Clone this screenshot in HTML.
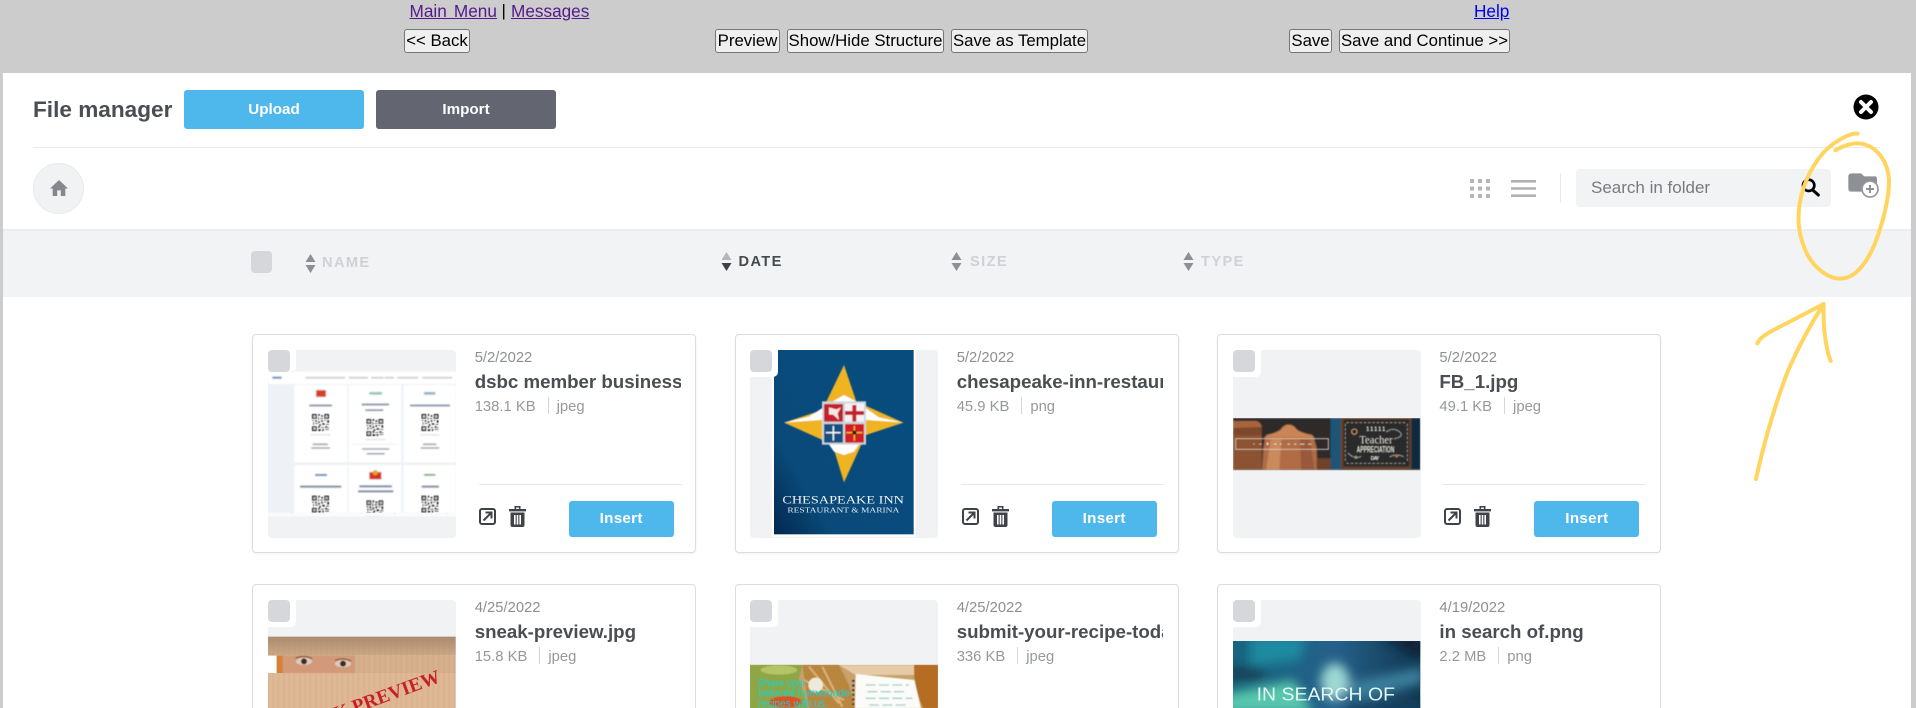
<!DOCTYPE html>
<html lang="en">
<head>
<meta charset="utf-8">
<title>File manager</title>
<style>
html,body{margin:0;padding:0;width:1916px;height:708px;overflow:hidden;background:#ccc;font-family:"Liberation Sans",sans-serif}
.a{position:absolute}
#page{position:relative;width:1916px;height:708px;overflow:hidden;background:#ccc}
.lnk{position:absolute;top:0;font-size:17.2px;line-height:22px;text-decoration:underline;color:#551a8b;white-space:nowrap}
.nb{position:absolute;top:29px;height:24px;box-sizing:border-box;background:#efefef;border:1px solid #767676;border-radius:3px;font-size:16.8px;line-height:21px;text-align:center;color:#000;white-space:nowrap;overflow:hidden}
.tb{position:absolute;top:90px;height:39px;width:180px;border-radius:3px;color:#fff;font-weight:bold;font-size:15.2px;line-height:40px;text-align:center}
.hd{position:absolute;font-size:14.6px;font-weight:bold;letter-spacing:1.4px;line-height:16px;color:#cfd1d5;white-space:nowrap}
.card{position:absolute;width:444px;height:219px;box-sizing:border-box;background:#fff;border:1px solid #dcdddf;border-radius:4px;box-shadow:0 1px 2px rgba(0,0,0,.06);overflow:hidden}
.card.r2{height:124px;border-bottom:none;border-radius:4px 4px 0 0;box-shadow:none}
.thumb{position:absolute;left:14.7px;top:15px;width:188px;height:188px;background:#f1f2f4;border-radius:4px;overflow:hidden}
.thumb svg{position:absolute;left:0;top:0;width:188px;height:188px;display:block}
.notch{position:absolute;left:14.7px;top:15px;width:28px;height:27px;background:#fff;border-radius:0 0 5px 0}
.cb{position:absolute;left:14.7px;top:15px;width:22px;height:22px;background:#d5d7db;border-radius:4px}
.date{position:absolute;left:221px;top:14px;font-size:14.8px;line-height:18px;color:#8d8f94;white-space:nowrap}
.title{position:absolute;left:221px;top:34.500px;width:206px;font-size:18.7px;font-weight:bold;line-height:23px;color:#4a4d52;white-space:nowrap;overflow:hidden}
.meta{position:absolute;left:221px;top:62px;height:18px;font-size:14.8px;line-height:18px;color:#96989c;white-space:nowrap}
.meta i{display:inline-block;width:1px;height:17px;background:#d5d7da;margin:0 8px 0 12px;vertical-align:-3px}
.rule{position:absolute;left:225px;top:149px;width:203px;height:1px;background:#e8e9eb}
.open{position:absolute;left:226px;top:173px;width:17px;height:17px}
.trash{position:absolute;left:256px;top:171px;width:17px;height:21px}
.ins{position:absolute;left:316px;top:166px;width:105px;height:36px;background:#4eb8ec;border-radius:3px;color:#fff;font-size:15.2px;font-weight:bold;letter-spacing:.3px;line-height:35px;text-align:center}
.c1 .thumb,.c1 .notch,.c1 .cb,.c1 .date,.c1 .title,.c1 .meta,.c1 .rule{margin-left:.5px}
.c1 .ins{margin-left:-.5px}
</style>
</head>
<body>
<div id="page">

<svg width="0" height="0" style="position:absolute">
<defs>
<filter id="b1" x="-5%" y="-5%" width="110%" height="110%"><feGaussianBlur stdDeviation="2.4"/></filter>
<filter id="b2" x="-5%" y="-5%" width="110%" height="110%"><feGaussianBlur stdDeviation="1.2"/></filter>
<filter id="b3" x="-30%" y="-30%" width="160%" height="160%"><feGaussianBlur stdDeviation="16"/></filter>
<linearGradient id="navy" x1="0.9" y1="0.3" x2="0" y2="1"><stop offset="0" stop-color="#084c7e"/><stop offset=".7" stop-color="#094a7a"/><stop offset="1" stop-color="#04284f"/></linearGradient>
<linearGradient id="card0" x1="0" y1="0" x2="0" y2="1"><stop offset="0" stop-color="#a98b70"/><stop offset="1" stop-color="#cda885"/></linearGradient>
<pattern id="ribs" width="16" height="16" patternUnits="userSpaceOnUse"><rect width="7" height="16" fill="#b08a68" opacity=".1"/></pattern>
<linearGradient id="sea" x1="0" y1="0" x2="1" y2="0"><stop offset="0" stop-color="#16657d"/><stop offset=".55" stop-color="#25608a"/><stop offset="1" stop-color="#103750"/></linearGradient>
<clipPath id="seaclip"><rect x="99" y="213" width="562" height="441"/></clipPath>
<clipPath id="fbclip"><rect x="99" y="294" width="562" height="157"/></clipPath>
<symbol id="qr" viewBox="0 0 51 51">
<rect width="51" height="51" fill="#fff"/>
<g fill="#222">
<path d="M0 0h15v15H0zM36 0h15v15H36zM0 36h15v15H0z"/>
<path d="M18 0h6v6h-6zM27 3h6v6h-6zM18 9h3v9h-3zM24 12h9v3h-9zM0 18h6v3H0zM9 18h6v6H9zM18 21h6v6h-6zM27 18h6v6h-6zM36 18h6v3h-6zM45 18h6v9h-6zM3 24h3v9H3zM9 27h9v3H9zM21 30h6v6h-6zM30 27h9v6h-9zM42 30h9v3h-9zM18 36h6v6h-6zM27 39h9v3h-9zM39 36h6v6h-6zM18 45h9v6h-9zM30 45h6v6h-6zM39 45h12v3H39zM45 39h6v3h-6z"/>
</g>
<g fill="#fff"><path d="M4 4h7v7H4zM40 4h7v7h-7zM4 40h7v7H4z"/></g>
<g fill="#222"><path d="M6 6h3v3H6zM42 6h3v3h-3zM6 42h3v3H6z"/></g>
</symbol>
</defs>
</svg>

<a class="lnk" style="left:409.5px;word-spacing:2.4px">Main Menu</a>
<div class="a" style="left:501.500px;top:0;font-size:17px;line-height:22px;color:#000">|</div>
<a class="lnk" style="left:511px">Messages</a>
<a class="lnk" style="left:1474px;color:#0000ee">Help</a>

<div class="nb" style="left:404px;width:66px">&lt;&lt; Back</div>
<div class="nb" style="left:715px;width:65px">Preview</div>
<div class="nb" style="left:787px;width:157px">Show/Hide Structure</div>
<div class="nb" style="left:951px;width:137px">Save as Template</div>
<div class="nb" style="left:1289px;width:43px">Save</div>
<div class="nb" style="left:1339px;width:171px">Save and Continue &gt;&gt;</div>

<div class="a" style="left:3px;top:73px;width:1908px;height:635px;background:#fff"></div>

<div class="a" style="left:33px;top:96px;font-size:22.6px;font-weight:bold;line-height:27px;color:#4a4d52;white-space:nowrap">File manager</div>
<div class="tb" style="left:184px;background:#4eb8ec">Upload</div>
<div class="tb" style="left:376px;background:#636670">Import</div>

<svg class="a" style="left:1853px;top:94px" width="26" height="26" viewBox="0 0 26 26">
<circle cx="13" cy="13" r="12.5" fill="#000"/>
<path d="M8 8l10 10M18 8L8 18" stroke="#fff" stroke-width="4" stroke-linecap="round"/>
</svg>

<div class="a" style="left:33px;top:147px;width:1847px;height:1px;background:#e9eaec"></div>

<div class="a" style="left:33px;top:163px;width:51px;height:51px;box-sizing:border-box;border-radius:50%;background:#f1f2f4;border:1px solid #e8e9eb"></div>
<svg class="a" style="left:49.5px;top:180px" width="18" height="16" viewBox="2 3 20 17" preserveAspectRatio="none">
<path d="M10 20v-6h4v6h5v-8h3L12 3 2 12h3v8z" fill="#85878d"/>
</svg>

<svg class="a" style="left:1470px;top:179px" width="20" height="19" viewBox="0 0 20 19" fill="#b4b5b7">
<path d="M0 0h4v4H0zM8 0h4v4H8zM16 0h4v4h-4zM0 7.5h4v4H0zM8 7.5h4v4H8zM16 7.5h4v4h-4zM0 15h4v4H0zM8 15h4v4H8zM16 15h4v4h-4z"/>
</svg>
<svg class="a" style="left:1511px;top:180px" width="25" height="17" viewBox="0 0 25 17" fill="#b0b1b3">
<path d="M0 0h25v2.600H0zM0 7.200h25v2.600H0zM0 14.400h25v2.600H0z"/>
</svg>
<div class="a" style="left:1560px;top:173px;width:1px;height:30px;background:#e9eaec"></div>
<div class="a" style="left:1576px;top:169px;width:255px;height:38px;background:#f2f3f5;border-radius:4px"></div>
<div class="a" style="left:1591px;top:177px;font-size:17px;line-height:21px;color:#777a80;white-space:nowrap">Search in folder</div>

<div class="a" style="left:3px;top:229px;width:1908px;height:68px;background:#f2f3f5;box-shadow:inset 0 3px 3px -2px rgba(0,0,0,.05)"></div>

<div class="a" style="left:251px;top:251px;width:21px;height:22px;background:#d5d7db;border-radius:4px"></div>

<svg class="a" style="left:305px;top:254px" width="11" height="19" viewBox="0 0 11 19"><path d="M5.5 0L10.5 8H.5zM.5 11h10l-5 8z" fill="#8d8f94"/></svg>
<div class="hd" style="left:322px;top:255px">NAME</div>
<svg class="a" style="left:721px;top:252px" width="11" height="19" viewBox="0 0 11 19"><path d="M5.5 0L10.5 8H.5z" fill="#b4b6ba"/><path d="M.5 11h10l-5 8z" fill="#3e4147"/></svg>
<div class="hd" style="left:738.500px;top:254px;color:#45484d">DATE</div>
<svg class="a" style="left:951px;top:252px" width="11" height="19" viewBox="0 0 11 19"><path d="M5.5 0L10.5 8H.5zM.5 11h10l-5 8z" fill="#8d8f94"/></svg>
<div class="hd" style="left:970px;top:254px">SIZE</div>
<svg class="a" style="left:1183px;top:252px" width="11" height="19" viewBox="0 0 11 19"><path d="M5.5 0L10.5 8H.5zM.5 11h10l-5 8z" fill="#8d8f94"/></svg>
<div class="hd" style="left:1201px;top:254px">TYPE</div>

<!-- Card 1 -->
<div class="card c1" style="left:252.2px;top:334px">
  <div class="thumb"><svg viewBox="84 90 564 564">
    <g filter="url(#b1)">
      <rect x="84" y="155" width="564" height="37" fill="#fff"/>
      <rect x="84" y="192" width="564" height="388" fill="#eef1f6"/>
      <rect x="97" y="170" width="28" height="6" fill="#5b83b5"/>
      <path d="M197 171h118v4H197zM326 171h58v4h-58zM393 171h38v4h-38zM434 171h28v4h-28zM472 171h62v4h-62zM547 171h90v4h-90z" fill="#b9bdc4"/>
      <path d="M163 195h159v232H163zM326 195h158v232H326zM491 195h157v232H491zM163 435h159v145H163zM326 435h158v145H326zM491 435h157v145H491z" fill="#fff"/>
      <rect x="228" y="210" width="30" height="21" fill="#d5402c"/>
      <rect x="388" y="216" width="38" height="8" fill="#8fc3bf"/>
      <rect x="552" y="216" width="34" height="8" fill="#8fb0c2"/>
      <path d="M208 254h68v5h-68zM365 251h82v5h-82zM376 268h54v5h-54zM510 254h120v5H510z" fill="#6d7d98"/>
      <path d="M212 343h60v3h-60zM376 357h60v3h-60zM540 343h58v3h-58z" fill="#d7d9dd"/>
      <path d="M218 371h46v4h-46zM214 382h56v4h-56zM549 371h40v4h-40zM542 382h56v4h-56zM366 385h82v4h-82zM380 399h54v4h-54z" fill="#7d8798"/>
      <rect x="336" y="372" width="136" height="2" fill="#e7e8ea"/>
      <rect x="225" y="462" width="36" height="6" fill="#5b83b5"/>
      <rect x="388" y="456" width="36" height="22" fill="#cf3026"/>
      <circle cx="406" cy="458" r="8" fill="#e6a320"/>
      <rect x="552" y="462" width="34" height="5" fill="#4f9e5f"/>
      <path d="M180 497h124v6H180zM358 496h98v6h-98zM354 511h106v6H354zM545 497h52v6h-52z" fill="#6d7d98"/>
    </g>
    <g filter="url(#b2)">
      <use href="#qr" x="216" y="282" width="51" height="51"/>
      <use href="#qr" x="379" y="297" width="51" height="51"/>
      <use href="#qr" x="544" y="282" width="52" height="51"/>
      <use href="#qr" x="216" y="527" width="51" height="51"/>
      <use href="#qr" x="379" y="541" width="51" height="51"/>
      <use href="#qr" x="544" y="527" width="52" height="51"/>
    </g>
    <rect x="84" y="578" width="564" height="12" fill="#fbfbfc"/>
    <path d="M156 578v6M464 578v6M620 578v6" stroke="#dfe1e4" stroke-width="2"/>
    <rect x="84" y="590" width="564" height="64" fill="#f1f2f4"/>
  </svg></div>
  <div class="notch" style="height:21px;width:28px;border-radius:0 0 4px 0"></div><div class="cb"></div>
  <div class="date">5/2/2022</div>
  <div class="title">dsbc member business cards.jpg</div>
  <div class="meta">138.1 KB<i></i>jpeg</div>
  <div class="rule"></div>
  <svg class="open" viewBox="0 0 17 17" fill="none" stroke="#3f4249" stroke-width="2"><rect x="1" y="1" width="15" height="15" rx="2"/><path d="M4.5 12.5L12 5M6.5 4.500h6v6"/></svg>
  <svg class="trash" viewBox="0 0 17 21"><path d="M0 3h17v2.4H0zM5.5 0h6v3h-1.6V1.5H7.1V3H5.5z" fill="#3f4249"/><path d="M1.5 6.5h14V19a2 2 0 0 1-2 2h-10a2 2 0 0 1-2-2z" fill="#3f4249"/><path d="M5 9h1.6v9.5H5zM7.7 9h1.6v9.5H7.7zM10.4 9H12v9.5h-1.600z" fill="#fff"/></svg>
  <div class="ins">Insert</div>
</div>

<!-- Card 2 -->
<div class="card" style="left:734.7px;top:334px">
  <div class="thumb"><svg viewBox="93 90 564 564">
    <rect x="158" y="90" width="432" height="560" fill="#fff"/>
    <rect x="165" y="90" width="419" height="553" fill="url(#navy)"/>
    <g filter="url(#b2)">
      <path d="M375 135L412 245 553 308 440 345 375 487 340 373 195 308 310 270z" fill="#f0b323"/>
      <path d="M340 245L375 225 412 245 480 292 553 308 440 300 440 345 405 395 375 405 345 395 310 345 310 300 195 308 270 290z" fill="#fff"/>
      <path d="M195 308L310 300 310 345z" fill="#f0b323"/>
      <path d="M553 308L440 300 440 345z" fill="#f0b323"/>
      <rect x="309" y="244" width="132" height="130" fill="#cfd6dc"/>
      <rect x="315" y="252" width="57" height="53" fill="#c4202c"/>
      <rect x="378" y="250" width="57" height="55" fill="#f3f3f3"/>
      <rect x="315" y="312" width="57" height="56" fill="#134f80"/>
      <rect x="378" y="312" width="57" height="56" fill="#d21f26"/>
      <path d="M330 262l22 6 14-6-10 18 4 20-18-16-12 0z" fill="#f5e9e2"/>
      <path d="M400 255h12v18h23v12h-23v20h-12v-20h-22v-12h22z" fill="#c4202c"/>
      <path d="M341 318h4v18h20v4h-20v22h-4v-22h-20v-4h20z" fill="#fff"/>
      <path d="M404 318h4v18h22v4h-22v22h-4v-22h-22v-4h22z" fill="#f2c41c"/>
      <circle cx="406" cy="338" r="6" fill="#1a1a1a"/>
    </g>
    <text x="190" y="550" font-family="'Liberation Serif',serif" font-size="36" fill="#eef2f5" textLength="365" lengthAdjust="spacingAndGlyphs">CHESAPEAKE INN</text>
    <text x="205" y="578" font-family="'Liberation Serif',serif" font-size="21" fill="#dfe7ee" textLength="336" lengthAdjust="spacingAndGlyphs">RESTAURANT &amp; MARINA</text>
  </svg></div>
  <div class="notch"></div><div class="cb"></div>
  <div class="date">5/2/2022</div>
  <div class="title">chesapeake-inn-restaurant.png</div>
  <div class="meta">45.9 KB<i></i>png</div>
  <div class="rule"></div>
  <svg class="open" viewBox="0 0 17 17" fill="none" stroke="#3f4249" stroke-width="2"><rect x="1" y="1" width="15" height="15" rx="2"/><path d="M4.5 12.5L12 5M6.5 4.500h6v6"/></svg>
  <svg class="trash" viewBox="0 0 17 21"><path d="M0 3h17v2.4H0zM5.5 0h6v3h-1.6V1.5H7.1V3H5.5z" fill="#3f4249"/><path d="M1.5 6.5h14V19a2 2 0 0 1-2 2h-10a2 2 0 0 1-2-2z" fill="#3f4249"/><path d="M5 9h1.6v9.5H5zM7.7 9h1.6v9.5H7.7zM10.4 9H12v9.5h-1.600z" fill="#fff"/></svg>
  <div class="ins">Insert</div>
</div>

<!-- Card 3 -->
<div class="card" style="left:1217.4px;top:334px">
  <div class="thumb"><svg viewBox="99 90 564 564">
    <g clip-path="url(#fbclip)">
    <g filter="url(#b1)">
      <rect x="99" y="294" width="562" height="157" fill="#2d2b29"/>
      <path d="M99 303h70q14 4 16 18v130H99z" fill="#7d4729"/>
      <path d="M99 303h70q14 4 16 18l-86 3z" fill="#a8653d"/>
      <rect x="99" y="345" width="86" height="106" fill="#8c5333"/>
      <path d="M200 345q40-8 48-24 18-14 36 0 8 16 52 24l8 10H192z" fill="#cb8454"/>
      <path d="M195 352h146l8 28 4 71H186l4-65z" fill="#b06c44"/>
      <path d="M212 358h32l-6 93h-40z" fill="#c98a5c"/>
      <path d="M300 358h30l14 93h-40z" fill="#99593a"/>
      <rect x="350" y="415" width="42" height="36" fill="#70422a"/>
      <rect x="392" y="294" width="30" height="157" fill="#1d5478"/>
      <rect x="422" y="294" width="212" height="153" fill="#6a4325"/>
      <rect x="430" y="298" width="198" height="142" fill="#2c2c2a"/>
      <rect x="634" y="294" width="27" height="157" fill="#0f2c40"/>
      <rect x="99" y="449" width="562" height="2" fill="#9a9a9a"/>
    </g>
    <g filter="url(#b2)" stroke-linecap="round" fill="none">
      <path d="M440 308h180M440 430h180M436 312v112M622 312v112" stroke="#a3a194" stroke-width="3" stroke-dasharray="6 7"/>
      <path d="M560 335q20-14 38 0t-18 22M445 400q20 20 40 8M570 410q20-10 40 0" stroke="#8f9ba2" stroke-width="4" stroke-dasharray="5 4"/>
      <circle cx="463" cy="335" r="8" stroke="#d1935f" stroke-width="4"/>
      <circle cx="590" cy="408" r="5" fill="#b9764a"/>
      <circle cx="468" cy="412" r="5" fill="#8a9670"/>
    </g>
    <g filter="url(#b2)" fill="#f2f0e6" font-family="'Liberation Sans',sans-serif">
      <text x="498" y="333" font-size="18" font-weight="bold" textLength="58">11111</text>
      <text x="478" y="370" font-size="36" font-family="'Liberation Serif',serif" textLength="100" lengthAdjust="spacingAndGlyphs">Teacher</text>
      <text x="470" y="397" font-size="28" font-weight="bold" textLength="113" lengthAdjust="spacingAndGlyphs">APPRECIATION</text>
      <text x="512" y="420" font-size="15" font-weight="bold" textLength="26">DAY</text>
      <rect x="107" y="356" width="278" height="32" fill="none" stroke="#ddd6cc" stroke-width="2.5"/>
      <path d="M160 371h4v3h-4zM178 371h6v3h-6zM200 368h5v7h-5zM222 371h8v3h-8zM240 371h5v3h-5zM262 371h8v3h-8zM282 371h7v3h-7zM300 371h14v3h-14zM324 371h10v3h-10z" fill="#efe9df"/>
    </g>
    </g>
  </svg></div>
  <div class="notch"></div><div class="cb"></div>
  <div class="date">5/2/2022</div>
  <div class="title">FB_1.jpg</div>
  <div class="meta">49.1 KB<i></i>jpeg</div>
  <div class="rule"></div>
  <svg class="open" viewBox="0 0 17 17" fill="none" stroke="#3f4249" stroke-width="2"><rect x="1" y="1" width="15" height="15" rx="2"/><path d="M4.5 12.5L12 5M6.5 4.500h6v6"/></svg>
  <svg class="trash" viewBox="0 0 17 21"><path d="M0 3h17v2.4H0zM5.5 0h6v3h-1.6V1.5H7.1V3H5.5z" fill="#3f4249"/><path d="M1.5 6.5h14V19a2 2 0 0 1-2 2h-10a2 2 0 0 1-2-2z" fill="#3f4249"/><path d="M5 9h1.6v9.5H5zM7.7 9h1.6v9.5H7.7zM10.4 9H12v9.5h-1.600z" fill="#fff"/></svg>
  <div class="ins">Insert</div>
</div>

<!-- Card 4 -->
<div class="card r2 c1" style="left:252.2px;top:584px">
  <div class="thumb"><svg viewBox="84 90 564 564">
    <rect x="84" y="200" width="563" height="57" fill="url(#card0)"/>
    <rect x="84" y="308" width="563" height="346" fill="#dfb996"/>
    <rect x="84" y="257" width="563" height="52" fill="#d7b08e"/>
    <rect x="84" y="200" width="563" height="454" fill="url(#ribs)"/>
    <rect x="84" y="257" width="26" height="52" fill="#fff"/>
    <rect x="110" y="257" width="20" height="52" fill="#d77f36"/>
    <g filter="url(#b2)">
      <rect x="128" y="257" width="217" height="52" fill="#d39a79"/>
      <ellipse cx="192" cy="274" rx="24" ry="11" fill="#dfcbbd"/>
      <circle cx="192" cy="274" r="9" fill="#3c2a20"/>
      <ellipse cx="309" cy="281" rx="24" ry="11" fill="#dfcbbd"/>
      <circle cx="309" cy="281" r="9" fill="#3c2a20"/>
      <path d="M167 264q25-10 50 2M285 271q24-10 48 2" stroke="#6a4735" stroke-width="3" fill="none"/>
    </g>
    <text transform="translate(144 503) rotate(-20)" font-family="'Liberation Serif',serif" font-weight="bold" font-size="58" fill="#c81f2a" textLength="490" lengthAdjust="spacingAndGlyphs">SNEAK PREVIEW</text>
  </svg></div>
  <div class="notch"></div><div class="cb"></div>
  <div class="date">4/25/2022</div>
  <div class="title">sneak-preview.jpg</div>
  <div class="meta">15.8 KB<i></i>jpeg</div>
</div>

<!-- Card 5 -->
<div class="card r2" style="left:734.7px;top:584px">
  <div class="thumb"><svg viewBox="93 90 564 564">
    <rect x="90" y="285" width="567" height="369" fill="#c7a26c"/>
    <g filter="url(#b2)">
      <path d="M90 285h160l-10 40 30 100H90z" fill="#8fa647"/>
      <ellipse cx="180" cy="300" rx="55" ry="14" fill="#b4c466"/>
      <path d="M250 285h110l30 60 20 70H270z" fill="#b9863f"/>
      <path d="M270 290l90 110M310 290l60 120M255 330l120 60" stroke="#d9b47a" stroke-width="6"/>
      <path d="M360 285h230v30H410z" fill="#e6cba8"/>
      <path d="M585 285h72v130h-44q-30-60-28-130z" fill="#b46d20"/>
      <circle cx="290" cy="345" r="22" fill="#eeeadb"/>
      <ellipse cx="200" cy="396" rx="50" ry="18" fill="#df5122"/>
      <path d="M410 312l176 18 20 85H408z" fill="#fbfbf8"/>
      <path d="M440 345h130M445 365h115M440 385h140M450 405h120" stroke="#a2cdd4" stroke-width="4" stroke-dasharray="30 10"/>
      <path d="M403 330v85" stroke="#222" stroke-width="7" stroke-dasharray="5 9"/>
    </g>
    <g font-family="'Liberation Sans',sans-serif" font-size="33" fill="#14d3d3">
      <text x="115" y="349" textLength="146" lengthAdjust="spacingAndGlyphs">Share your</text>
      <text x="118" y="379" textLength="275" lengthAdjust="spacingAndGlyphs">beloved homemade</text>
      <text x="118" y="411" textLength="208" lengthAdjust="spacingAndGlyphs">recipes with us.</text>
    </g>
  </svg></div>
  <div class="notch"></div><div class="cb"></div>
  <div class="date">4/25/2022</div>
  <div class="title">submit-your-recipe-today.jpg</div>
  <div class="meta">336 KB<i></i>jpeg</div>
</div>

<!-- Card 6 -->
<div class="card r2" style="left:1217.4px;top:584px">
  <div class="thumb"><svg viewBox="99 90 564 564">
    <g clip-path="url(#seaclip)">
      <rect x="99" y="213" width="562" height="441" fill="url(#sea)"/>
      <g filter="url(#b3)">
        <path d="M150 200h170l-20 70-150 20z" fill="#1f8aa0"/>
        <path d="M70 375l210-45 60 100H70z" fill="#57c7ae"/>
        <path d="M70 290h120v40H70z" fill="#143f58"/>
        <path d="M440 340l230-50v50l-200 50z" fill="#3a7f9e"/>
        <ellipse cx="405" cy="335" rx="42" ry="55" fill="#9fd8d2"/>
        <path d="M540 200h130v70z" fill="#0b2436"/>
        <path d="M450 400h220v40H450z" fill="#12405e"/>
      </g>
      <text x="170" y="392" font-family="'Liberation Sans',sans-serif" font-size="54" fill="#e6f5f1" textLength="415" lengthAdjust="spacingAndGlyphs">IN SEARCH OF</text>
    </g>
  </svg></div>
  <div class="notch"></div><div class="cb"></div>
  <div class="date">4/19/2022</div>
  <div class="title">in search of.png</div>
  <div class="meta">2.2 MB<i></i>png</div>
</div>

<!-- Folder add + search icon -->
<svg class="a" style="left:1720px;top:80px" width="196" height="420" viewBox="0 0 588 1260">
  <path d="M385 290q0-10 10-10h28l10 9h32q6 0 6 8v38H395q-10 0-10-10z" fill="#8d9095"/>
  <circle cx="450" cy="327" r="24" fill="#fff" stroke="#95979b" stroke-width="5"/>
  <path d="M450 315v24M438 327h24" stroke="#8d9095" stroke-width="6"/>
  <circle cx="266" cy="316" r="17" fill="none" stroke="#000" stroke-width="8"/>
  <path d="M278 330l17 15" stroke="#000" stroke-width="9" stroke-linecap="round"/>
</svg>

<!-- Yellow annotations -->
<svg class="a" style="left:1720px;top:80px" width="196" height="420" viewBox="0 0 588 1260" fill="none" stroke="#ffd45f" stroke-width="12" stroke-linecap="round" stroke-linejoin="round">
  <path d="M413 161C395 158 352 178 320 208 285 242 252 300 240 365 230 420 236 470 262 524 285 565 325 596 360 596 405 596 440 550 465 490 488 430 508 355 507 300 505 255 480 205 430 192 400 185 370 197 346 211"/>
  <path d="M108 1197C135 1075 170 960 205 870 240 790 280 720 311 672"/>
  <path d="M112 790C120 770 150 755 190 735 235 712 280 688 311 672 310 710 312 760 320 800 323 818 328 832 332 843"/>
</svg>

</div>
</body>
</html>
